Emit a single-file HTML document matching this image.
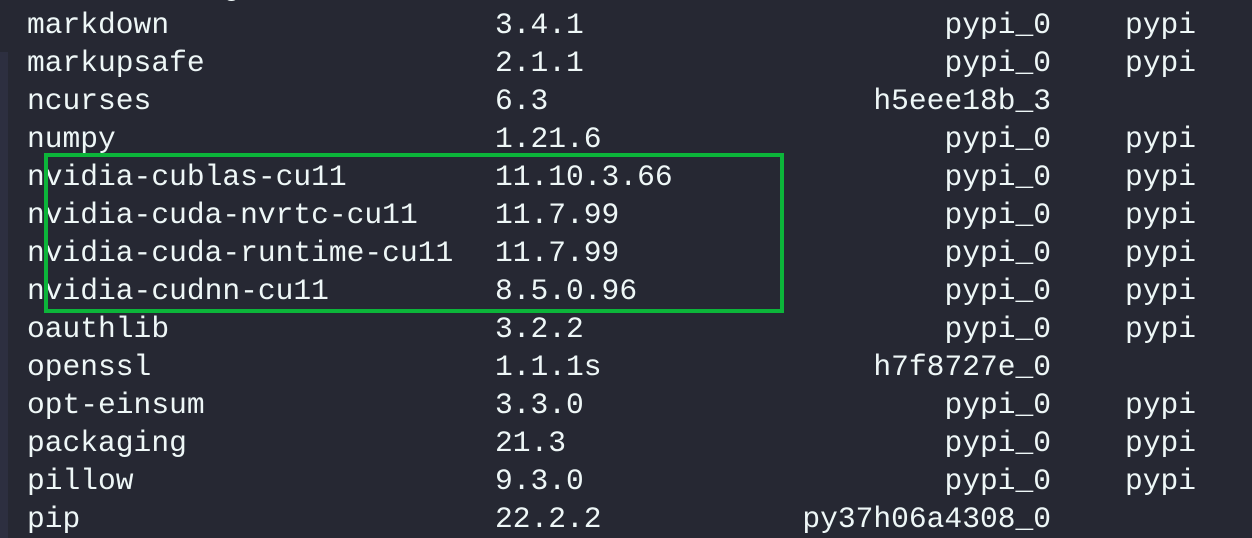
<!DOCTYPE html>
<html><head><style>
html,body{margin:0;padding:0}
body{width:1252px;height:538px;background:#262833;overflow:hidden;position:relative;font-family:"Liberation Mono","DejaVu Sans Mono",monospace;font-size:29.6px;color:#eef7f7}
.bar{position:absolute;left:0;top:52px;width:8px;height:486px;background:#2d2f40}
.r{position:absolute;left:0;width:1252px;height:38px;line-height:38px}
.r span{position:absolute;top:0;white-space:pre}
.a{left:27px}.b{left:495px}.c{right:201px;text-align:right}.d{left:1125px}
.box{position:absolute;left:44px;top:153px;width:732px;height:152px;border:4px solid #0cb53a}
</style></head><body>
<div class="bar"></div>
<div class="r" style="top:-32px"><span class="a">           g</span></div>
<div class="r" style="top:6px"><span class="a">markdown</span><span class="b">3.4.1</span><span class="c">pypi_0</span><span class="d">pypi</span></div>
<div class="r" style="top:44px"><span class="a">markupsafe</span><span class="b">2.1.1</span><span class="c">pypi_0</span><span class="d">pypi</span></div>
<div class="r" style="top:82px"><span class="a">ncurses</span><span class="b">6.3</span><span class="c">h5eee18b_3</span></div>
<div class="r" style="top:120px"><span class="a">numpy</span><span class="b">1.21.6</span><span class="c">pypi_0</span><span class="d">pypi</span></div>
<div class="r" style="top:158px"><span class="a">nvidia-cublas-cu11</span><span class="b">11.10.3.66</span><span class="c">pypi_0</span><span class="d">pypi</span></div>
<div class="r" style="top:196px"><span class="a">nvidia-cuda-nvrtc-cu11</span><span class="b">11.7.99</span><span class="c">pypi_0</span><span class="d">pypi</span></div>
<div class="r" style="top:234px"><span class="a">nvidia-cuda-runtime-cu11</span><span class="b">11.7.99</span><span class="c">pypi_0</span><span class="d">pypi</span></div>
<div class="r" style="top:272px"><span class="a">nvidia-cudnn-cu11</span><span class="b">8.5.0.96</span><span class="c">pypi_0</span><span class="d">pypi</span></div>
<div class="r" style="top:310px"><span class="a">oauthlib</span><span class="b">3.2.2</span><span class="c">pypi_0</span><span class="d">pypi</span></div>
<div class="r" style="top:348px"><span class="a">openssl</span><span class="b">1.1.1s</span><span class="c">h7f8727e_0</span></div>
<div class="r" style="top:386px"><span class="a">opt-einsum</span><span class="b">3.3.0</span><span class="c">pypi_0</span><span class="d">pypi</span></div>
<div class="r" style="top:424px"><span class="a">packaging</span><span class="b">21.3</span><span class="c">pypi_0</span><span class="d">pypi</span></div>
<div class="r" style="top:462px"><span class="a">pillow</span><span class="b">9.3.0</span><span class="c">pypi_0</span><span class="d">pypi</span></div>
<div class="r" style="top:500px"><span class="a">pip</span><span class="b">22.2.2</span><span class="c">py37h06a4308_0</span></div>
<div class="box"></div>
</body></html>
